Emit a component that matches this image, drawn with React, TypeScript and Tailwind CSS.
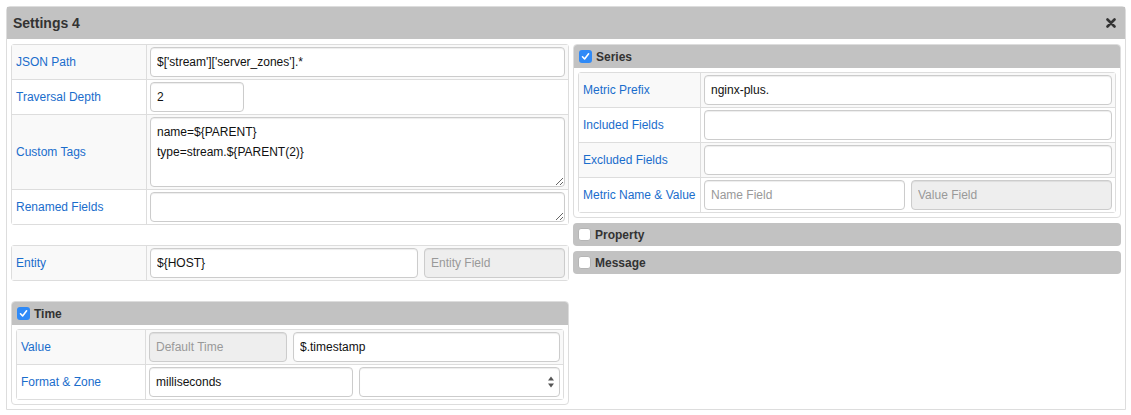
import React from "react";

const font = { fontFamily: '"Liberation Sans", Arial, Helvetica, sans-serif' };

const inputCls =
  "h-[30px] min-w-0 rounded-[4px] border border-[#ccc] bg-white px-[6px] text-[12px] text-[#111] shadow-[inset_0_1px_1px_rgba(0,0,0,0.075)] outline-none placeholder:text-[#999]";
const disabledCls =
  "h-[30px] min-w-0 rounded-[4px] border border-[#ccc] bg-[#eee] px-[6px] text-[12px] text-[#999] shadow-[inset_0_1px_1px_rgba(0,0,0,0.075)] outline-none placeholder:text-[#999]";

function Row({
  label,
  labelW,
  striped,
  last,
  children,
}: {
  label: string;
  labelW: string;
  striped: boolean;
  last?: boolean;
  children: React.ReactNode;
}) {
  return (
    <div className={`flex ${last ? "" : "border-b border-[#ddd]"} ${striped ? "bg-[#f9f9f9]" : "bg-white"}`}>
      <div className={`${labelW} flex shrink-0 items-center border-r border-[#ddd] px-[4px] text-[12px] text-[#1a6dcc]`}>
        {label}
      </div>
      <div className="flex min-w-0 flex-1 gap-[6px] py-[2px] pl-[3px] pr-[3px]">{children}</div>
    </div>
  );
}

function Check({ on }: { on: boolean }) {
  if (on)
    return (
      <span className="flex h-[13px] w-[13px] items-center justify-center rounded-[3px] bg-[#2f8af7]">
        <svg width="9" height="9" viewBox="0 0 9 9">
          <path d="M1.5 4.8 L3.6 7 L7.6 1.8" fill="none" stroke="white" strokeWidth="1.6" strokeLinecap="round" strokeLinejoin="round" />
        </svg>
      </span>
    );
  return <span className="h-[13px] w-[13px] rounded-[3px] border border-[#b5b5b5] bg-white" />;
}

function SectionHead({ label, on, rounded }: { label: string; on: boolean; rounded?: boolean }) {
  return (
    <div
      className={`flex h-[23px] items-center gap-[4px] bg-[#c2c2c2] pl-[5px] text-[12px] font-bold text-[#333] ${
        rounded ? "rounded-[4px]" : "rounded-t-[3px]"
      }`}
    >
      <Check on={on} />
      <span>{label}</span>
    </div>
  );
}

export default function App() {
  return (
    <div className="h-[415px] w-[1131px] overflow-hidden bg-white pl-[6px] pt-[6px]" style={font}>
      <div className="w-[1120px] rounded-t-[4px] border border-[#ddd]">
        {/* header */}
        <div className="flex h-[32px] items-center justify-between bg-[#c2c2c2] pl-[6px] pr-[9px]">
          <span className="text-[14px] font-bold text-[#333]">Settings 4</span>
          <svg width="10" height="10" viewBox="0 0 10 10">
            <path d="M1.5 1.5 L8.5 8.5 M8.5 1.5 L1.5 8.5" stroke="#333" strokeWidth="2.6" strokeLinecap="round" />
          </svg>
        </div>

        <div className="flex gap-[4px] px-[4px] pb-[4px] pt-[5px]">
          {/* left column */}
          <div className="flex w-[558px] flex-col">
            <div className="rounded-[3px] border border-[#ddd]">
              <Row label="JSON Path" labelW="w-[135px]" striped>
                <input className={`${inputCls} flex-1`} defaultValue="$['stream']['server_zones'].*" />
              </Row>
              <Row label="Traversal Depth" labelW="w-[135px]" striped={false}>
                <input className={`${inputCls} w-[94px]`} defaultValue="2" />
              </Row>
              <Row label="Custom Tags" labelW="w-[135px]" striped>
                <textarea
                  className="h-[70px] min-w-0 flex-1 rounded-[4px] border border-[#ccc] bg-white px-[6px] py-[4px] text-[12px] leading-[20px] text-[#111] shadow-[inset_0_1px_1px_rgba(0,0,0,0.075)] outline-none"
                  defaultValue={"name=${PARENT}\ntype=stream.${PARENT(2)}"}
                />
              </Row>
              <Row label="Renamed Fields" labelW="w-[135px]" striped={false} last>
                <textarea className="h-[30px] min-w-0 flex-1 rounded-[4px] border border-[#ccc] bg-white px-[6px] py-[4px] text-[12px] leading-[20px] shadow-[inset_0_1px_1px_rgba(0,0,0,0.075)] outline-none" />
              </Row>
            </div>

            <div className="mt-[20px] rounded-[3px] border border-[#ddd]">
              <Row label="Entity" labelW="w-[135px]" striped last>
                <input className={`${inputCls} flex-1`} defaultValue="${HOST}" />
                <input className={`${disabledCls} w-[141px]`} placeholder="Entity Field" disabled />
              </Row>
            </div>

            <div className="mt-[20px] rounded-[4px] border border-[#ddd]">
              <SectionHead label="Time" on />
              <div className="px-[4px] pb-[4px] pt-[4px]">
                <div className="rounded-[3px] border border-[#ddd]">
                  <Row label="Value" labelW="w-[129px]" striped>
                    <input className={`${disabledCls} w-[138px]`} placeholder="Default Time" disabled />
                    <input className={`${inputCls} flex-1`} defaultValue="$.timestamp" />
                  </Row>
                  <Row label="Format & Zone" labelW="w-[129px]" striped={false} last>
                    <input className={`${inputCls} flex-1`} defaultValue="milliseconds" />
                    <div className={`${inputCls} flex flex-1 items-center justify-end pr-[4px]`}>
                      <svg width="8" height="14" viewBox="0 0 8 14">
                        <path d="M4 1.5 L7 5.5 L1 5.5 Z M4 12.5 L7 8.5 L1 8.5 Z" fill="#555" />
                      </svg>
                    </div>
                  </Row>
                </div>
              </div>
            </div>
          </div>

          {/* right column */}
          <div className="flex min-w-0 flex-1 flex-col">
            <div className="rounded-[4px] border border-[#ddd]">
              <SectionHead label="Series" on />
              <div className="p-[4px]">
                <div className="rounded-[3px] border border-[#ddd]">
                  <Row label="Metric Prefix" labelW="w-[122px]" striped>
                    <input className={`${inputCls} flex-1`} defaultValue="nginx-plus." />
                  </Row>
                  <Row label="Included Fields" labelW="w-[122px]" striped={false}>
                    <input className={`${inputCls} flex-1`} />
                  </Row>
                  <Row label="Excluded Fields" labelW="w-[122px]" striped>
                    <input className={`${inputCls} flex-1`} />
                  </Row>
                  <Row label="Metric Name & Value" labelW="w-[122px]" striped={false} last>
                    <input className={`${inputCls} flex-1`} placeholder="Name Field" />
                    <input className={`${disabledCls} flex-1`} placeholder="Value Field" disabled />
                  </Row>
                </div>
              </div>
            </div>
            <div className="mt-[5px]">
              <SectionHead label="Property" on={false} rounded />
            </div>
            <div className="mt-[5px]">
              <SectionHead label="Message" on={false} rounded />
            </div>
          </div>
        </div>
      </div>
    </div>
  );
}
